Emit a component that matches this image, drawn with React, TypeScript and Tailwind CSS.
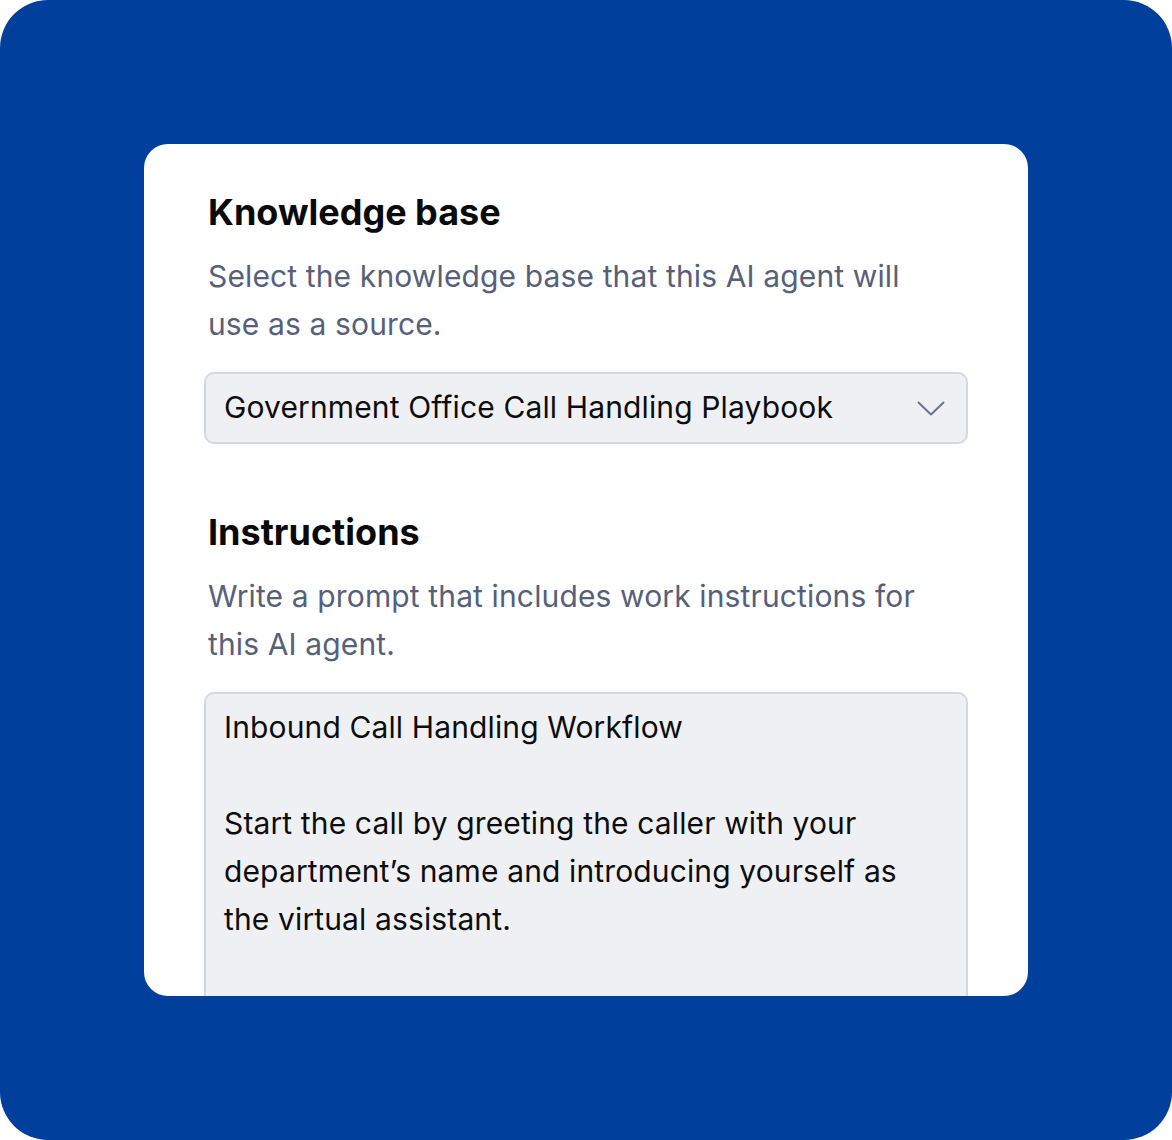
import React from 'react';

const ChevronDown = () => (
    <svg width="28" height="15" viewBox="0 0 28 15" fill="none" className="shrink-0">
        <polyline points="1.5,1.5 14,13.5 26.5,1.5" stroke="#6b7587" strokeWidth="2" strokeLinecap="round" strokeLinejoin="round" />
    </svg>
);

const App = () => {
    return (
        <div className="w-[1172px] h-[1140px] bg-white font-['Inter',sans-serif]">
            <div className="w-full h-full bg-[#003f9b] rounded-[48px] p-[144px]">
                <div className="w-full h-full bg-white rounded-[24px] overflow-hidden px-[60px] pt-[44px]">
                    {/* Knowledge base */}
                    <h2 className="pl-1 text-[36px] leading-[48px] font-bold text-[#0a0a0a]">Knowledge base</h2>
                    <p className="pl-1 mt-4 max-w-[728px] text-[30px] leading-[48px] tracking-[0.13px] text-[#566079]">
                        Select the knowledge base that this AI agent will use as a source.
                    </p>
                    <div className="mt-6 h-[72px] flex items-center justify-between rounded-[10px] border-2 border-[#d2d7e0] bg-[#eff0f4] pl-[18px] pr-[21px]">
                        <span className="text-[30px] leading-[48px] tracking-[0.13px] text-[#0d0d0d] -mt-[2px]">Government Office Call Handling Playbook</span>
                        <ChevronDown />
                    </div>

                    {/* Instructions */}
                    <h2 className="pl-1 mt-16 text-[36px] leading-[48px] font-bold text-[#0a0a0a]">Instructions</h2>
                    <p className="pl-1 mt-4 max-w-[728px] text-[30px] leading-[48px] tracking-[0.13px] text-[#566079]">
                        Write a prompt that includes work instructions for this AI agent.
                    </p>
                    <div className="mt-6 h-[400px] rounded-[10px] border-2 border-[#d2d7e0] bg-[#eff0f4] pl-[18px] pr-[28px] pt-[9px] text-[30px] leading-[48px] tracking-[0.13px] text-[#0d0d0d] whitespace-pre-wrap">
                        {"Inbound Call Handling Workflow\n\nStart the call by greeting the caller with your department\u2019s name and introducing yourself as the virtual assistant."}
                    </div>
                </div>
            </div>
        </div>
    );
};

export default App;
